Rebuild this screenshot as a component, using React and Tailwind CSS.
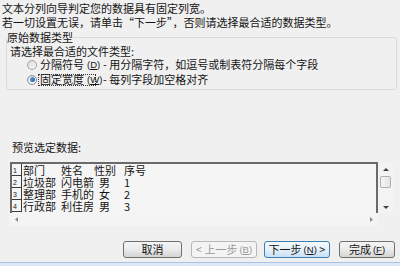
export default function App() {
  const rows = [
    ["部门", "姓名", "性别", "序号", true],
    ["垃圾部", "闪电箭", "男", "1", false],
    ["整理部", "手机的", "女", "2", false],
    ["行政部", "利佳房", "男", "3", false],
  ];
  const btn =
    "h-[17px] flex items-center justify-center rounded-[3px] border text-[11px] leading-none";
  const lat = "font-['Liberation_Sans',sans-serif] text-[9.5px]";
  return (
    <div className="w-[400px] h-[266px] bg-[#f0f0f0] overflow-hidden flex flex-col text-[#151515] text-[11px] leading-[14px] font-['Noto_Sans_CJK_SC','Noto_Sans',sans-serif]">
      <div className="pl-[2px] pt-[1px]">
        <p className="leading-[14px] whitespace-nowrap">文本分列向导判定您的数据具有固定列宽。</p>
        <p className="leading-[14px] whitespace-nowrap">若一切设置无误，请单击“下一步”，否则请选择最合适的数据类型。</p>
      </div>

      <fieldset className="ml-[6px] mr-[3px] mt-[2px] h-[59px] border border-[#d5dbe0] rounded-[3px] p-0">
        <legend className="p-0 leading-[12px] whitespace-nowrap">原始数据类型</legend>
        <div className="pl-[3px] mt-[3px] leading-[11px] whitespace-nowrap">请选择最合适的文件类型:</div>
        <div className="flex items-center h-[15px] pl-[20px] whitespace-nowrap">
          <div className="w-[10px] h-[10px] shrink-0 rounded-full border border-[#a3a3a3] bg-gradient-to-br from-[#d8d8d8] to-[#fafafa]" />
          <span className="ml-[1px] w-[58px] h-[12px] shrink-0 flex items-center px-[1px] border border-transparent leading-none">
            分隔符号<span className={"ml-[3px] " + lat}>(<u>D</u>)</span>
          </span>
          <span className="ml-[7px] leading-none">- 用分隔字符，如逗号或制表符分隔每个字段</span>
        </div>
        <div className="flex items-center h-[15px] pl-[20px] whitespace-nowrap">
          <div className="w-[10px] h-[10px] shrink-0 rounded-full border border-[#8a8f94] bg-gradient-to-br from-[#dfe3e6] to-[#fbfbfb] flex items-center justify-center">
            <div className="w-[5px] h-[5px] rounded-full bg-gradient-to-br from-[#6aa8e8] to-[#1c5aa6]" />
          </div>
          <span className="ml-[1px] w-[58px] h-[12px] shrink-0 flex items-center px-[1px] border border-dotted border-[#333] leading-none">
            固定宽度<span className={"ml-[3px] " + lat}>(<u>W</u>)</span>
          </span>
          <span className="ml-[7px] leading-none">- 每列字段加空格对齐</span>
        </div>
      </fieldset>

      <div className="mt-[51px] pl-[12px] leading-[13px] whitespace-nowrap">预览选定数据:</div>

      <div className="mt-[8px] ml-[10px] w-[383px] h-[64px] grid grid-cols-[368px_15px] grid-rows-[51px_13px]">
        <div className="border-l-2 border-t-2 border-r-2 border-[#6a6a6a] bg-[#f5f5f5] overflow-hidden">
          {rows.map((r, i) => (
            <div key={i} className="flex h-[12px] items-center whitespace-nowrap">
              <div className="w-[10px] h-[12px] shrink-0 border-r border-b border-[#3a3a3a] flex items-end pl-[1px] text-[7px] leading-[8px] font-['Liberation_Sans',sans-serif]">
                {i + 1}
              </div>
              <span className="w-[39px] shrink-0 pl-[1px] leading-[12px]">{r[0]}</span>
              <span className="w-[33px] shrink-0 leading-[12px]">{r[1]}</span>
              <span className={"w-[30px] shrink-0 leading-[12px] " + (r[4] ? "" : "pl-[5px]")}>{r[2]}</span>
              <span className="leading-[12px]">{r[3]}</span>
            </div>
          ))}
        </div>
        <div className="bg-[#f3f3f3] flex flex-col items-center pt-[6px] pb-[4px]">
          <svg width="6" height="3" viewBox="0 0 6 3">
            <path d="M0 3 L3 0 L6 3 Z" fill="#404040" />
          </svg>
          <div className="mt-[5px] w-[11px] h-[12px] rounded-[2px] border border-[#b0b0b0] bg-gradient-to-r from-[#f6f6f6] to-[#e4e4e4]" />
          <div className="flex-1" />
          <svg width="6" height="3" viewBox="0 0 6 3">
            <path d="M0 0 L6 0 L3 3 Z" fill="#404040" />
          </svg>
        </div>
        <div className="bg-[#f4f4f4] flex items-center justify-between px-[5px]">
          <svg width="3" height="5" viewBox="0 0 3 5">
            <path d="M3 0 L0 2.5 L3 5 Z" fill="#8a8a8a" />
          </svg>
          <svg width="3" height="5" viewBox="0 0 3 5">
            <path d="M0 0 L3 2.5 L0 5 Z" fill="#8a8a8a" />
          </svg>
        </div>
        <div className="bg-[#f0f0f0]" />
      </div>

      <div className="mt-[15px] flex justify-end pr-[5px] whitespace-nowrap">
        <div className={btn + " w-[59px] border-[#707070] bg-gradient-to-b from-[#f4f4f4] via-[#ebebeb] to-[#d4d4d4]"}>取消</div>
        <div className={btn + " ml-[9px] w-[66px] border-[#b5b9bc] bg-[#f4f4f4] text-[#9a9a9a]"}>
          &lt; 上一步<span className={"ml-[2px] " + lat}>(<u>B</u>)</span>
        </div>
        <div className={btn + " ml-[7px] w-[66px] border-[#3c7fb1] bg-gradient-to-b from-[#f4f9fd] via-[#e6f1fb] to-[#c9e0f5]"}>
          下一步<span className={"ml-[2px] " + lat}>(<u>N</u>)</span>&nbsp;&gt;
        </div>
        <div className={btn + " ml-[9px] w-[56px] border-[#707070] bg-gradient-to-b from-[#f4f4f4] via-[#ebebeb] to-[#d4d4d4]"}>
          完成<span className={"ml-[2px] " + lat}>(<u>F</u>)</span>
        </div>
      </div>

      <div className="mt-auto h-[4px] border-t border-[#a9c5e3] bg-[#dce8f5]" />
    </div>
  );
}
